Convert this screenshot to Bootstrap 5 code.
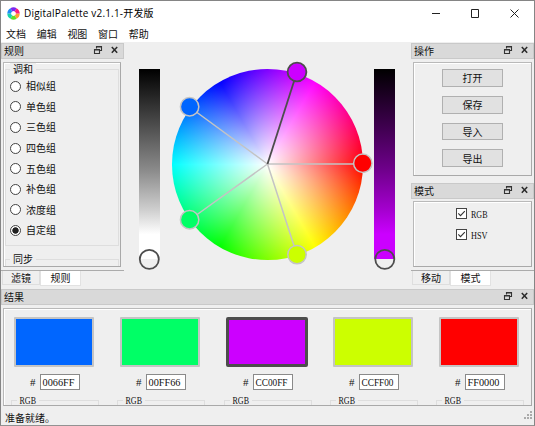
<!DOCTYPE html>
<html lang="zh-CN">
<head>
<meta charset="utf-8">
<title>DigitalPalette</title>
<link href="https://cdn.jsdelivr.net/npm/bootstrap@5.3.0/dist/css/bootstrap.min.css" rel="stylesheet">
<script src="https://cdn.jsdelivr.net/npm/bootstrap@5.3.0/dist/js/bootstrap.bundle.min.js"></script>
<style>
*{box-sizing:border-box}
body{font:10px/14px "Noto Sans CJK SC",sans-serif;color:#111;background:#efefef;overflow:hidden}
svg{display:block;flex:none;overflow:visible}
.win{width:535px;height:426px;border:1px solid #858585;border-bottom-color:#929292;background:#efefef;overflow:hidden}
.titlebar{height:24px;background:#fff;padding-left:6px}
.caption{font-family:"Open Sans","Noto Sans CJK SC",sans-serif;font-size:10px;letter-spacing:.19px;padding-left:4px;color:#000;white-space:nowrap}
.menus{height:17px;background:#fff;padding-left:5px;gap:10.7px;line-height:17px}
.middle{height:246px;margin-top:1px}
.dock-l{width:123px}
.dock-r{width:123px}
.dock-title{height:16px;background:#d9d9d9;border:1px solid #c9c9c9;padding:0 0 0 2px;line-height:14px;flex:none}
.mode-title{margin-top:7px}
.frame{border:1px solid #b9b9b9;border-right-color:#a9a9a9;border-bottom-color:#a9a9a9;box-shadow:inset 1px 1px #fff;overflow:hidden;flex:none}
.rules{width:118px;height:205px;margin:3px 0 0 2px;padding:6px 1px 0 1px}
.group{border:1px solid #dedede;margin:0}
.group-a{height:177px;padding:6px 0 0 4px}
.group-b{height:30px;margin-top:13px}
.group-name{display:block;width:max-content;background:#efefef;padding:0 3px;margin-left:4px;line-height:14px;margin-top:-8px}
.group-a .group-name{margin-top:-14px;margin-left:0;margin-bottom:0}
.pick{height:20.6px;gap:5px}
.dot{width:11px;height:11px;border:1px solid #444;border-radius:50%;background:#fff;flex:none}
.dot.on{background:radial-gradient(circle,#222 0 2.8px,#fff 3.6px)}
.tabs{height:16px;margin-top:3px;border-top:1px solid #ababab;padding-left:1px;flex:none}
.tab-off{width:38px;height:14px;border:1px solid #dedede;border-top:0;text-align:center;line-height:14px}
.tab-on{width:41px;height:15px;background:#fff;border:1px solid #e2e2e2;border-top:0;text-align:center;line-height:14px}
.canvas-area{padding:26px 16px 0 15px;position:relative}
.bar{width:21px;height:190px;flex:none}
.bar-grey{background:linear-gradient(#000,#535353 32%,#8a8a8a 53%,#cecece 74%,#fff 87%)}
.bar-violet{background:linear-gradient(#000,#420053 32%,#6f008b 53%,#a400ce 74%,#cb00ff 87%)}
.wheel{width:191px;height:191px;margin-top:-.5px;border-radius:50%;background:radial-gradient(circle closest-side,#fff,rgba(255,255,255,0)),conic-gradient(from 90deg,red,#ff0,#0f0,#0ff,#00f,#f0f,red)}
.handles{position:absolute;left:0;top:0}
.ops{width:119px;height:114px;margin:3px 0 0 2px;padding-top:6px;gap:9px}
.opbtn{--bs-btn-padding-x:0;--bs-btn-padding-y:0;--bs-btn-font-size:10px;--bs-btn-line-height:15px;--bs-btn-border-radius:0;--bs-btn-bg:#e1e1e1;--bs-btn-border-color:#b0b0b0;--bs-btn-color:#111;width:61px;height:17.8px}
.modes{width:119px;height:66px;margin:2px 0 0 2px;padding:6px 0 0 42px}
.tick-row{height:20.5px;gap:3.5px}
.results{width:529px;height:98px;margin:3px 0 0 2px}
.slot{width:106.3px;flex:none}
.swatch{width:80px;height:50px;border:2px solid #c4c4c4;border-radius:1px;margin:8px 0 0 10px}
.swatch.sel{border:3px solid #4d4d4d;border-radius:2px;width:82px;margin-left:9.5px}
.hexrow{margin:7px 0 0 26px;gap:4px;height:16px}
.hexbox{width:40px;height:16px;border:1px solid #8a8a8a;background:#fff}
.rgbgroup{width:88px;height:20px;border:1px solid #dedede;margin:10px 0 0 7px}
.rgbgroup svg{margin:-6px 0 0 5px;background:#efefef}
svg text{font-family:"Liberation Serif",serif;fill:#111}
.status{height:19px;padding:5px 1px 0 4px}
</style>
</head>
<body>
<svg width="0" height="0" class="position-absolute">
 <symbol id="dockicons" viewBox="0 0 30 12"><path d="M3.5 4.5V2.5h5v4h-2M3.5 3h5M1.5 5.5h5v4h-5zM1.5 6h5" fill="none" stroke="#333" stroke-width="1.1"/><path d="M18.8 3l5.4 5.8M24.2 3l-5.4 5.8" stroke="#2b2b2b" stroke-width="1.5"/></symbol>
 <symbol id="tick" viewBox="0 0 11 11"><rect x=".5" y=".5" width="10" height="10" fill="#fff" stroke="#444"/><path d="M2.3 5.4l2.2 2.3 4.3-4.5" fill="none" stroke="#333" stroke-width="1.1"/></symbol>
</svg>
<div class="win d-flex flex-column">
 <div class="titlebar d-flex align-items-center flex-shrink-0">
  <svg width="13" height="13" viewBox="0 0 13 13" fill="none" stroke-width="3.8"><g transform="translate(6.5 6.5)"><path d="M4.3 0A4.3 4.3 0 0 1 2.15 3.72" stroke="#ffa030"/><path d="M2.15 3.72A4.3 4.3 0 0 1-2.15 3.72" stroke="#5fe02a"/><path d="M-2.15 3.72A4.3 4.3 0 0 1-4.3 0" stroke="#19d4ac"/><path d="M-4.3 0A4.3 4.3 0 0 1-2.15-3.72" stroke="#1e8cf5"/><path d="M-2.15-3.72A4.3 4.3 0 0 1 2.15-3.72" stroke="#7a28f0"/><path d="M2.15-3.72A4.3 4.3 0 0 1 4.3 0" stroke="#fa1f78"/></g></svg>
  <span class="caption">DigitalPalette v2.1.1-开发版</span>
  <svg class="ms-auto" width="104" height="24" viewBox="0 0 104 24" fill="none" stroke="#222"><path d="M2 12.5h8M41.5 8.5h7v8h-7zM80.5 8.5l8 8M88.5 8.5l-8 8"/></svg>
 </div>
 <div class="menus d-flex flex-shrink-0"><span>文档</span><span>编辑</span><span>视图</span><span>窗口</span><span>帮助</span></div>
 <div class="middle d-flex flex-shrink-0">
  <div class="dock-l d-flex flex-column">
   <div class="dock-title d-flex"><span>规则</span><svg class="ms-auto" width="30" height="12"><use href="#dockicons"/></svg></div>
   <div class="frame rules">
    <div class="group group-a"><span class="group-name">调和</span>
     <div class="pick d-flex align-items-center"><i class="dot"></i>相似组</div>
     <div class="pick d-flex align-items-center"><i class="dot"></i>单色组</div>
     <div class="pick d-flex align-items-center"><i class="dot"></i>三色组</div>
     <div class="pick d-flex align-items-center"><i class="dot"></i>四色组</div>
     <div class="pick d-flex align-items-center"><i class="dot"></i>五色组</div>
     <div class="pick d-flex align-items-center"><i class="dot"></i>补色组</div>
     <div class="pick d-flex align-items-center"><i class="dot"></i>浓度组</div>
     <div class="pick d-flex align-items-center"><i class="dot on"></i>自定组</div>
    </div>
    <div class="group group-b"><span class="group-name">同步</span></div>
   </div>
   <div class="tabs d-flex"><div class="tab-off">滤镜</div><div class="tab-on">规则</div></div>
  </div>
  <div class="canvas-area d-flex justify-content-between flex-grow-1">
   <div class="bar bar-grey"></div>
   <div class="wheel"></div>
   <div class="bar bar-violet"></div>
   <svg class="handles" width="286" height="246" viewBox="124 43 286 246" fill="none">
    <g stroke="#c4c4c4" stroke-width="1.5"><path d="M267.5 164L189.5 107M267.5 164L189.5 220M267.5 164L297 255M267.5 164H362.5"/>
    <circle cx="189.6" cy="106.8" r="9.2" fill="#06f"/><circle cx="189.6" cy="219.8" r="9.2" fill="#0f6"/><circle cx="297" cy="254.6" r="9.2" fill="#cf0"/><circle cx="362.8" cy="163.3" r="9.2" fill="red"/></g>
    <g stroke="#4d4d4d" stroke-width="1.8"><path d="M267.5 164L297 72"/><circle cx="297" cy="72" r="9.4" fill="#c0f"/><circle cx="149.3" cy="259.3" r="9.5"/><circle cx="384.8" cy="259.3" r="9.5"/></g>
   </svg>
  </div>
  <div class="dock-r d-flex flex-column">
   <div class="dock-title d-flex"><span>操作</span><svg class="ms-auto" width="30" height="12"><use href="#dockicons"/></svg></div>
   <div class="frame ops d-flex flex-column align-items-center">
    <button class="btn opbtn">打开</button><button class="btn opbtn">保存</button><button class="btn opbtn">导入</button><button class="btn opbtn">导出</button>
   </div>
   <div class="dock-title d-flex mode-title"><span>模式</span><svg class="ms-auto" width="30" height="12"><use href="#dockicons"/></svg></div>
   <div class="frame modes">
    <div class="tick-row d-flex"><svg width="11" height="11"><use href="#tick"/></svg><svg width="20" height="14"><text x="0" y="9.5" font-size="11" textLength="16.5" lengthAdjust="spacingAndGlyphs">RGB</text></svg></div>
    <div class="tick-row d-flex"><svg width="11" height="11"><use href="#tick"/></svg><svg width="20" height="14"><text x="0" y="9.5" font-size="11" textLength="16.5" lengthAdjust="spacingAndGlyphs">HSV</text></svg></div>
   </div>
   <div class="tabs d-flex"><div class="tab-off">移动</div><div class="tab-on">模式</div></div>
  </div>
 </div>
 <div class="dock-title d-flex"><span>结果</span><svg class="ms-auto" width="30" height="12"><use href="#dockicons"/></svg></div>
 <div class="frame results d-flex" id="results"></div>
 <div class="status d-flex justify-content-between"><span>准备就绪。</span><svg width="9" height="9" viewBox="0 0 9 9" fill="#aaa"><path d="M6 0h2v2H6zM3 3h2v2H3zM6 3h2v2H6zM0 6h2v2H0zM3 6h2v2H3zM6 6h2v2H6z"/></svg></div>
</div>
<script>
document.getElementById('results').innerHTML=['0066FF','00FF66','CC00FF','CCFF00','FF0000'].map((c,i)=>
`<div class="slot"><div class="swatch${i==2?' sel':''}" style="background-color:#${c}"></div>
<div class="hexrow d-flex"><svg width="6" height="16"><text x="0" y="12" font-size="11">#</text></svg><div class="hexbox"><svg width="38" height="14"><text x="1.5" y="11" font-size="11" textLength="32" lengthAdjust="spacingAndGlyphs">${c}</text></svg></div></div>
<div class="rgbgroup"><svg width="22" height="12"><text x="2.5" y="9" font-size="11" textLength="16.5" lengthAdjust="spacingAndGlyphs">RGB</text></svg></div></div>`).join('');
</script>
</body>
</html>
